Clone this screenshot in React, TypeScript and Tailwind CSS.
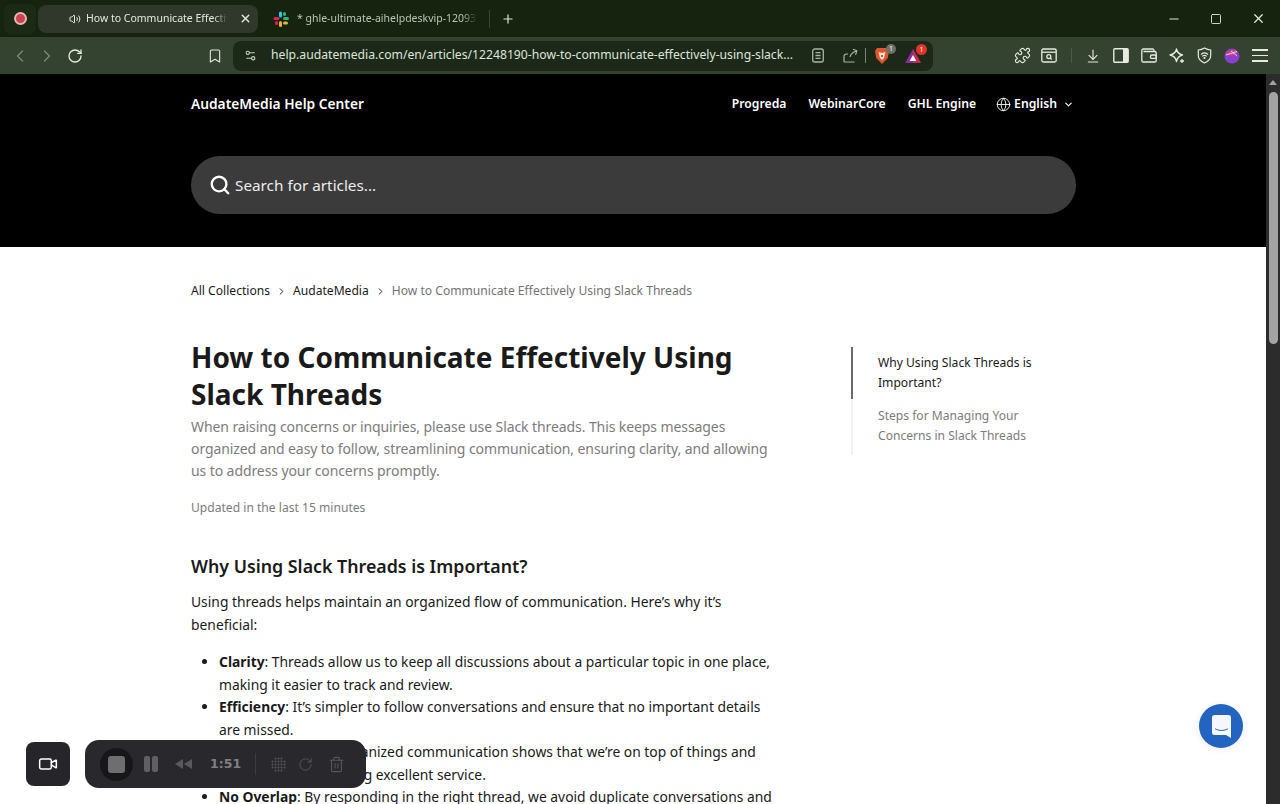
import {
  ArrowDownToLine,
  Bookmark,
  ChevronDown,
  ChevronLeft,
  ChevronRight,
  Globe,
  Minus,
  Plus,
  Puzzle,
  RotateCw,
  Search,
  Settings2,
  Square,
  Trash2,
  Video,
  Volume2,
  X,
} from "lucide-react";

const font = "font-['Noto_Sans','Open_Sans',sans-serif]";

const SlackLogo = () => (
  <svg width="16" height="16" viewBox="0 0 16 16">
    <rect x="6" y="0.5" width="3" height="6" rx="1.5" fill="#36c5f0" />
    <rect x="0.5" y="6" width="6" height="3" rx="1.5" fill="#e01e5a" />
    <rect x="10" y="6" width="6" height="3" rx="1.5" fill="#2eb67d" />
    <rect x="6" y="10" width="3" height="6" rx="1.5" fill="#ecb22e" />
    <rect x="10" y="1" width="3" height="4" rx="1.5" fill="#2eb67d" />
    <rect x="2" y="10" width="3" height="4" rx="1.5" fill="#e01e5a" />
    <rect x="10" y="10.5" width="5" height="3" rx="1.5" fill="#ecb22e" />
  </svg>
);

const BraveLion = () => (
  <svg width="16" height="18" viewBox="0 0 16 18">
    <path d="M3 1h10l2 3-1.2 7L8 17 2.2 11 1 4z" fill="#e0562c" />
    <path d="M4.500 5l3.500 1 3.500-1-1.500 6L8 13l-2-2z" fill="#f7e6dc" />
    <path d="M7 8h2v2H7z" fill="#e0562c" />
  </svg>
);

const RewardsTriangle = () => (
  <svg width="18" height="16" viewBox="0 0 18 16">
    <path d="M9 1l8 14H1z" fill="#8a2a9c" />
    <path d="M9 1l8 14H9z" fill="#c22a55" />
    <path d="M9 7l3.400 6H5.600z" fill="#fff" />
  </svg>
);

const ReaderIcon = () => (
  <svg width="14" height="15" viewBox="0 0 14 15" fill="none" stroke="#aab2a4" strokeWidth="1.3" className="ml-[14px]">
    <rect x="1.700" y="1" width="10.600" height="13" rx="2" />
    <path d="M4.500 4.600h5M4.500 7.500h5M4.500 10.400h5" />
  </svg>
);

const ShareIcon = () => (
  <svg width="15" height="15" viewBox="0 0 15 15" fill="none" stroke="#aab2a4" strokeWidth="1.2" strokeLinejoin="round" className="ml-[18px]">
    <path d="M1 14V8.500A2.500 2.500 0 0 1 3.500 6H5M1 14h10.500M7 9c.6-3 3-5 6.500-6M10 1.200l3.800 1.600-1.200 4" />
  </svg>
);

const ScreenshotIcon = () => (
  <svg width="16" height="15" viewBox="0 0 16 15" fill="none" stroke="#e6eae2" strokeWidth="1.3" className="ml-[10px]">
    <rect x="0.800" y="1" width="14.400" height="13" rx="1.500" />
    <path d="M1 4.200h14" />
    <circle cx="7.800" cy="8.600" r="2" />
    <path d="M9.300 10.100l1.400 1.300" />
  </svg>
);

const PanelIcon = () => (
  <svg width="16" height="15" viewBox="0 0 16 15" className="ml-[12px]">
    <rect x="0.800" y="0.800" width="14.400" height="13.400" rx="1" fill="none" stroke="#e6eae2" strokeWidth="1.400" />
    <rect x="10" y="1" width="5" height="13" fill="#e6eae2" />
  </svg>
);

const WalletIcon = () => (
  <svg width="16" height="15" viewBox="0 0 16 15" fill="none" stroke="#e6eae2" strokeWidth="1.3" className="ml-[12px]">
    <path d="M13 3.500V2.400A1.400 1.400 0 0 0 11.600 1H2.400A1.600 1.600 0 0 0 .8 2.600v9.800A1.600 1.600 0 0 0 2.400 14h11.200a1.600 1.600 0 0 0 1.600-1.600V5a1.500 1.500 0 0 0-1.500-1.500H2.400" />
    <rect x="9.500" y="7" width="5.700" height="3.400" rx="1.200" />
  </svg>
);

const StarPlusIcon = () => (
  <svg width="16" height="16" viewBox="0 0 16 16" fill="none" stroke="#e6eae2" strokeWidth="1.3" strokeLinejoin="round" className="ml-[12px]">
    <path d="M7.500 1c.7 3.400 2.400 5.200 6 6-3.600.8-5.300 2.600-6 6.600C6.800 10 5 7.800 1 7c4-.8 5.800-2.600 6.500-6z" />
    <path d="M13 11v4M11 13h4" />
  </svg>
);

const ShieldWifiIcon = () => (
  <svg width="15" height="17" viewBox="0 0 15 17" fill="none" stroke="#e6eae2" strokeWidth="1.2" strokeLinecap="round" className="ml-[12px]">
    <path d="M7.500 1c2 1.200 3.800 1.800 6.200 2v5.500c0 3.600-2.500 6-6.200 7.500C3.800 14.500 1.300 12.100 1.300 8.500V3c2.400-.2 4.200-.8 6.200-2z" />
    <path d="M4.300 7.200c1.900-1.500 4.500-1.500 6.400 0M5.700 9c1.100-.8 2.500-.8 3.600 0" />
    <circle cx="7.500" cy="11" r="0.500" />
  </svg>
);

const ProfileBall = () => (
  <svg width="16" height="16" viewBox="0 0 16 16" className="ml-[12px]">
    <circle cx="8" cy="8" r="7.500" fill="#8a3fd0" />
    <path d="M1 6.500C4 2 11 0 14 4.500L8 8z" fill="#c8457f" />
    <path d="M2 7l11-3.500M7 3l6 5" stroke="#f2dbe8" strokeWidth="0.9" fill="none" />
  </svg>
);

const HamburgerIcon = () => (
  <div className="ml-[12px] w-[16px] flex flex-col gap-[4px]">
    <div className="h-[1.5px] bg-[#e6eae2]" />
    <div className="h-[1.5px] bg-[#e6eae2]" />
    <div className="h-[1.5px] bg-[#e6eae2]" />
  </div>
);

const Tabs = () => (
  <div className="h-[37px] flex items-center bg-[#16230f] text-[#e4e8e0]">
    <div className="w-[32px] h-[30px] ml-[4px] rounded-md bg-[#1a2a15] flex items-center justify-center">
      <div className="w-[13px] h-[13px] rounded-full border-2 border-[#e9b4b4] bg-[#c9434f]" />
    </div>
    <div className="w-[220px] h-[28px] ml-[2px] rounded-lg bg-[#30382c] flex items-center pl-[31px] pr-[6px]">
      <Volume2 size={12} className="shrink-0 mr-[5px]" />
      <span className="text-[10.5px] whitespace-nowrap overflow-hidden w-[142px] [mask-image:linear-gradient(to_right,black_90%,transparent)]">How to Communicate Effective</span>
      <X size={13} strokeWidth={2.500} className="ml-auto shrink-0" />
    </div>
    <div className="w-[231px] flex items-center pl-[15px]">
      <SlackLogo />
      <span className="ml-[8px] text-[10.5px] text-[#bcc4b6] whitespace-nowrap overflow-hidden w-[180px] [mask-image:linear-gradient(to_right,black_92%,transparent)]">* ghle-ultimate-aihelpdeskvip-12093</span>
    </div>
    <div className="w-px h-[18px] bg-[#3a4534]" />
    <Plus size={14} className="ml-[11px]" />
    <div className="ml-auto flex items-center gap-[29px] pr-[14px]">
      <Minus size={14} />
      <Square size={12} strokeWidth={1.8} />
      <X size={15} />
    </div>
  </div>
);

const Toolbar = () => (
  <div className="h-[37px] flex items-center bg-[#344330] text-[#e6eae2]">
    <ChevronLeft size={20} strokeWidth={1.5} className="ml-[10px] text-[#7a8874]" />
    <ChevronRight size={20} strokeWidth={1.5} className="ml-[7px] text-[#7a8874]" />
    <RotateCw size={16} strokeWidth={2} className="ml-[10px]" />
    <Bookmark size={16} strokeWidth={1.6} className="ml-[124px]" />
    <div className="ml-[10px] w-[700px] h-[30px] rounded-lg bg-[#1c2919] flex items-center pl-[11px]">
      <Settings2 size={13} className="text-[#c6ccc0]" />
      <span className="ml-[14px] text-[12.2px] text-[#dfe4da] whitespace-nowrap w-[526px] overflow-hidden">help.audatemedia.com/en/articles/12248190-how-to-communicate-effectively-using-slack...</span>
      <ReaderIcon />
      <ShareIcon />
      <div className="w-px h-[15px] ml-[7px] bg-[#7a8574]" />
      <div className="relative ml-[8px]">
        <BraveLion />
        <span className="absolute -top-[3px] -right-[6px] w-[10px] h-[10px] rounded-full bg-[#6b7268] text-[7px] leading-[10px] text-center text-white">1</span>
      </div>
      <div className="relative ml-[14px]">
        <RewardsTriangle />
        <span className="absolute -top-[4px] -right-[5px] w-[11px] h-[11px] rounded-full bg-[#e0352b] text-[7px] leading-[11px] text-center text-white">1</span>
      </div>
    </div>
    <Puzzle size={17} strokeWidth={1.6} className="ml-[81px]" />
    <ScreenshotIcon />
    <div className="w-px h-[15px] ml-[14px] bg-[#4c5a47]" />
    <ArrowDownToLine size={16} strokeWidth={1.7} className="ml-[13px]" />
    <PanelIcon />
    <WalletIcon />
    <StarPlusIcon />
    <ShieldWifiIcon />
    <ProfileBall />
    <HamburgerIcon />
  </div>
);

const Hero = () => (
  <header className="h-[173px] bg-black text-white">
    <div className="w-[885px] ml-[191px]">
      <div className="h-[61px] flex items-center font-semibold">
        <span className="text-[13.75px]">AudateMedia Help Center</span>
        <nav className="ml-auto flex items-center gap-[22px] pr-[2px] text-[12.2px]">
          <span>Progreda</span>
          <span>WebinarCore</span>
          <span>GHL Engine</span>
          <span className="flex items-center -ml-[2px]">
            <Globe size={15} strokeWidth={1.4} className="mr-[3px]" />
            English
            <ChevronDown size={11} strokeWidth={2.500} className="ml-[6px]" />
          </span>
        </nav>
      </div>
      <div className="mt-[21px] h-[58px] rounded-[29px] bg-[#3b3b3b] flex items-center pl-[18px]">
        <Search size={22} strokeWidth={2.6} />
        <span className="ml-[4px] text-[15.3px] text-[#ececec]">Search for articles...</span>
      </div>
    </div>
  </header>
);

const Article = () => (
  <main className="ml-[191px] pt-[36px] bg-white text-[#1a1a1a]">
    <div className="flex items-center text-[12.1px] h-[16px]">
      <span>All Collections</span>
      <ChevronRight size={11} className="mx-[6px]" />
      <span>AudateMedia</span>
      <ChevronRight size={11} className="mx-[6px]" />
      <span className="text-[#737373]">How to Communicate Effectively Using Slack Threads</span>
    </div>
    <div className="flex mt-[40px]">
      <article className="w-[590px]">
        <h1 className="text-[28px] leading-[37px] font-bold">How to Communicate Effectively Using Slack Threads</h1>
        <p className="mt-[3px] max-w-[585px] text-[14px] tracking-[-0.09px] leading-[22px] text-[#7c7c7c]">When raising concerns or inquiries, please use Slack threads. This keeps messages organized and easy to follow, streamlining communication, ensuring clarity, and allowing us to address your concerns promptly.</p>
        <p className="mt-[18px] text-[12.1px] leading-[16px] text-[#7c7c7c]">Updated in the last 15 minutes</p>
        <h2 className="mt-[38px] text-[17.8px] leading-[24px] font-semibold">Why Using Slack Threads is Important?</h2>
        <p className="mt-[13px] text-[13.85px] leading-[22.5px]">Using threads helps maintain an organized flow of communication. Here’s why it’s beneficial:</p>
        <ul className="mt-[15px] pl-[28px] list-disc text-[13.85px] leading-[22.5px]">
          <li><b>Clarity</b>: Threads allow us to keep all discussions about a particular topic in one place, making it easier to track and review.</li>
          <li><b>Efficiency</b>: It’s simpler to follow conversations and ensure that no important details are missed.</li>
          <li><b>Professionalism</b>: Organized communication shows that we’re on top of things and committed to providing excellent service.</li>
          <li><b>No Overlap</b>: By responding in the right thread, we avoid duplicate conversations and</li>
        </ul>
      </article>
      <aside className="ml-[70px] w-[210px] text-[12.1px] leading-[20px] pt-[8px]">
        <div className="border-l-2 border-[#6a6a6a] pl-[25px] pt-[6px] pb-[6px] text-[#1a1a1a]">Why Using Slack Threads is Important?</div>
        <div className="border-l-2 border-[#f2f2f2] pl-[25px] pt-[7px] pb-[9px] text-[#7c7c7c]">Steps for Managing Your Concerns in Slack Threads</div>
      </aside>
    </div>
  </main>
);

const DotGrid = () => (
  <svg width="17" height="17" viewBox="0 0 17 17" fill="#55555a" className="ml-[14px]">
    {[0, 1, 2, 3, 4].map((row) =>
      [0, 1, 2, 3, 4].map((col) =>
        Math.abs(row - 2) + Math.abs(col - 2) < 4 ? (
          <circle key={`${row}-${col}`} cx={2.5 + col * 3} cy={2.5 + row * 3} r="1" />
        ) : null,
      ),
    )}
  </svg>
);

const Recorder = () => (
  <div className="absolute left-[26px] top-[740px] flex items-start gap-[15px]">
    <div className="w-[44px] h-[44px] mt-[2px] rounded-lg bg-[#26262a] flex items-center justify-center text-white">
      <Video size={20} strokeWidth={1.8} />
    </div>
    <div className="w-[281px] h-[48px] rounded-[14px] bg-[#29292d] flex items-center pl-[15px] text-[#6c6c6f]">
      <div className="w-[33px] h-[33px] rounded-full bg-[#17171a] flex items-center justify-center">
        <div className="w-[17px] h-[17px] rounded-[3px] bg-[#6e6e70]" />
      </div>
      <div className="ml-[11px] flex gap-[2px]">
        <div className="w-[6px] h-[16px] rounded-[2px] bg-[#606063]" />
        <div className="w-[6px] h-[16px] rounded-[2px] bg-[#606063]" />
      </div>
      <svg width="18" height="10" viewBox="0 0 18 10" className="ml-[17px]" fill="#5a5a5d">
        <path d="M8 0v10L0 5zM17 0v10L9 5z" />
      </svg>
      <span className="ml-[17px] text-[12.5px] font-bold font-['DejaVu_Sans',sans-serif] text-[#808083]">1:51</span>
      <div className="w-px h-[22px] ml-[14px] bg-[#3c3c40]" />
      <DotGrid />
      <RotateCw size={15} strokeWidth={1.6} className="ml-[11px] text-[#55555a]" />
      <Trash2 size={17} strokeWidth={1.6} className="ml-[15px] text-[#55555a]" />
    </div>
  </div>
);

const Messenger = () => (
  <div className="absolute left-[1199px] top-[704px] w-[44px] h-[44px] rounded-full bg-[#2264c0] flex items-center justify-center shadow-[0_1px_8px_rgba(0,0,0,0.08)]">
    <svg width="19" height="23" viewBox="0 0 19 23">
      <path d="M2.500 0h14A2.500 2.500 0 0 1 19 2.500V23l-5-3H2.500A2.500 2.500 0 0 1 0 17.500v-15A2.500 2.500 0 0 1 2.500 0z" fill="#f4f7fc" />
      <path d="M3.500 14c3.500 2 8.500 2 12 0" stroke="#2a5c9e" strokeWidth="1" fill="none" strokeLinecap="round" />
    </svg>
  </div>
);

export default function App() {
  return (
    <div className={`relative w-[1280px] h-[804px] overflow-hidden bg-white ${font}`}>
      <Tabs />
      <Toolbar />
      <div className="flex h-[730px]">
        <div className="w-[1266px] overflow-hidden">
          <Hero />
          <Article />
        </div>
        <div className="w-[14px] bg-[#2c2c2c] pt-[6px] flex flex-col items-center">
          <div className="w-0 h-0 border-x-[4px] border-x-transparent border-b-[5px] border-b-[#a3a3a3]" />
          <div className="w-[9px] h-[252px] mt-[7px] rounded-full bg-[#a3a3a3]" />
        </div>
      </div>
      <Recorder />
      <Messenger />
    </div>
  );
}
